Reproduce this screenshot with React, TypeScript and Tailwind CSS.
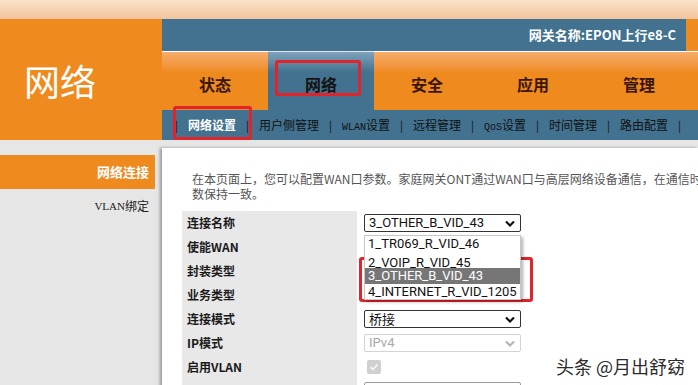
import { Fragment } from "react";

const tabs = ["状态", "网络", "安全", "应用", "管理"];

export default function App() {
  return (
    <div className="relative w-[698px] h-[385px] overflow-hidden bg-[#e6e6e6] font-['Noto_Sans_CJK_SC',sans-serif]">
      {/* top strip */}
      <div className="h-[19px] bg-linear-to-b from-[#fbe2c9] to-[#f1c49c]" />

      {/* header */}
      <div className="flex h-[121px]">
        <div className="w-[162px] shrink-0 bg-[#ef8a1f] flex items-center pl-[24px] text-white text-[36px] leading-none">
          网络
        </div>
        <div className="flex-1 min-w-0 flex flex-col">
          <div className="h-[32px] bg-[#42728f] flex items-center justify-end">
            <span className="text-white font-bold text-[13px] pr-[10px]">
              网关名称:EPON上行e8-C
            </span>
            <div className="w-[12px] h-full bg-[#ef8a1f]" />
          </div>
          <TabBar />
          <SubNav />
        </div>
      </div>

      {/* body */}
      <div className="flex">
        <SideMenu />
        <div className="flex-1 min-w-0 overflow-hidden mt-[8px] h-[240px] bg-white shadow-[-2px_0_3px_rgba(0,0,0,0.35)]">
          <div className="pl-[30px] pt-[23px] text-[12px] leading-[15px] text-[#555]">
            <div className="whitespace-nowrap">
              在本页面上，您可以配置WAN口参数。家庭网关ONT通过WAN口与高层网络设备通信，在通信时需要与上层设备的参
            </div>
            <div>数保持一致。</div>
          </div>
          <WanForm />
        </div>
      </div>

      {/* annotation boxes */}
      <div className="absolute left-[275px] top-[60px] w-[86px] h-[36px] border-[3px] border-[#e3232a] rounded-[3px]" />
      <div className="absolute left-[173px] top-[106px] w-[79px] h-[34px] border-[3px] border-[#e3232a] rounded-[3px]" />
      <div className="absolute left-[359px] top-[257px] w-[174px] h-[45px] border-[3px] border-[#e3232a] rounded-[3px]" />

      {/* watermark */}
      <div className="absolute left-[556px] top-[353px] text-[18px] leading-[26px] text-[#2b2b2b] [text-shadow:0_0_2px_#fff,0_0_2px_#fff]">
        头条 @月出舒窈
      </div>
    </div>
  );
}

function TabBar() {
  return (
    <div className="h-[59px] flex">
      {tabs.map((t) => (
        <div
          key={t}
          className={
            t === "网络"
              ? "w-[106px] shrink-0 flex items-center justify-center pt-[5px] border-t border-[#dfe9ef] bg-linear-to-b from-[#7fa3bb] from-0% to-[#42728f] to-35% text-[16px] font-bold text-[#141414]"
              : "w-[106px] shrink-0 flex items-center justify-center pt-[5px] border-t border-white bg-linear-to-b from-[#f6ad6a] from-0% to-[#ef8a1f] to-35% text-[16px] font-bold text-[#3a1606]"
          }
        >
          {t}
        </div>
      ))}
      <div className="flex-1 border-t border-white bg-linear-to-b from-[#f6ad6a] from-0% to-[#ef8a1f] to-35%" />
    </div>
  );
}

function SubNav() {
  const items = [
    <>网络设置</>,
    <>用户侧管理</>,
    <>
      <span className="font-['Liberation_Mono',monospace] text-[10px]">WLAN</span>设置
    </>,
    <>远程管理</>,
    <>
      <span className="font-['Liberation_Mono',monospace] text-[10px]">QoS</span>设置
    </>,
    <>时间管理</>,
    <>路由配置</>,
  ];
  return (
    <div className="h-[30px] bg-[#42728f] flex items-center pl-[3px] text-[12px] text-[#111] whitespace-nowrap">
      {items.map((it, i) => (
        <Fragment key={i}>
          <span className="mx-[10px] text-[11px]">|</span>
          <span className={i === 0 ? "text-white font-bold" : ""}>{it}</span>
        </Fragment>
      ))}
      <span className="mx-[10px] text-[11px]">|</span>
    </div>
  );
}

function SideMenu() {
  return (
    <div className="w-[162px] shrink-0 pt-[15px] text-[13px]">
      <div className="w-[155px] h-[34px] bg-[#ef8a1f] flex items-center justify-end pr-[6px] text-white font-bold">
        网络连接
      </div>
      <div className="w-[155px] h-[34px] flex items-center justify-end pr-[6px] text-[12px] text-[#222]">
        <span className="font-['Liberation_Serif',serif] text-[11px]">VLAN</span>绑定
      </div>
    </div>
  );
}

function Chevron({ color = "#111" }: { color?: string }) {
  return (
    <svg width="10" height="7" viewBox="0 0 10 7" className="absolute right-[5px] top-[5px]">
      <path d="M1 1.5 L5 5.5 L9 1.5" fill="none" stroke={color} strokeWidth="2.2" />
    </svg>
  );
}

function Select({ value, disabled }: { value: string; disabled?: boolean }) {
  return (
    <div
      className={
        disabled
          ? "relative w-[157px] h-[18px] border border-[#d4d4d4] rounded-[2px] pl-[4px] text-[13px] leading-[16px] text-[#a8a8a8]"
          : "relative w-[157px] h-[18px] border border-[#333] rounded-[2px] pl-[4px] text-[13px] leading-[16px] text-[#111]"
      }
    >
      {value}
      <Chevron color={disabled ? "#b4b4b4" : "#111"} />
    </div>
  );
}

function WanForm() {
  const rows = ["连接名称", "使能WAN", "封装类型", "业务类型", "连接模式", "IP模式", "启用VLAN", ""];
  return (
    <div className="ml-[20px] mt-[10px]">
      {rows.map((label, i) => (
        <div key={i} className="flex h-[24px]">
          <div className="w-[175px] shrink-0 bg-[#e8e8e8] pl-[5px] flex items-center text-[12px] font-bold text-[#1a1a1a]">
            {label}
          </div>
          <div className="relative flex-1 pl-[7px] flex items-center">
            {i === 0 && (
              <>
                <div className="font-['Roboto',sans-serif]">
                  <Select value="3_OTHER_B_VID_43" />
                </div>
                <NameList />
              </>
            )}
            {i === 4 && <Select value="桥接" />}
            {i === 5 && (
              <div className="font-['Roboto',sans-serif]">
                <Select value="IPv4" disabled />
              </div>
            )}
            {i === 6 && (
              <div className="ml-[3px] w-[14px] h-[14px] rounded-[2px] bg-[#d0d0d0] flex items-center justify-center">
                <svg width="10" height="10" viewBox="0 0 10 10">
                  <path d="M1.5 5 L4 7.5 L8.5 2.5" fill="none" stroke="#f4f4f4" strokeWidth="1.8" />
                </svg>
              </div>
            )}
            {i === 7 && <div className="self-end w-[157px] h-[21px] border border-[#999] rounded-[2px]" />}
          </div>
        </div>
      ))}
    </div>
  );
}

function NameList() {
  return (
    <div className="absolute left-[7px] top-[24px] w-[157px] bg-white border border-[#c8c8c8] shadow-[2px_2px_3px_rgba(0,0,0,0.3)] font-['Roboto',sans-serif] text-[13px] leading-[16px] text-[#111] z-10">
      <div className="h-[16px] pl-[3px]">1_TR069_R_VID_46</div>
      <div className="h-[16px] pl-[3px] overflow-hidden">
        <div className="translate-y-[3px]">2_VOIP_R_VID_45</div>
      </div>
      <div className="h-[16px] pl-[3px] bg-[#767676] text-white">3_OTHER_B_VID_43</div>
      <div className="h-[15px] pl-[3px] leading-[15px]">4_INTERNET_R_VID_1205</div>
    </div>
  );
}
